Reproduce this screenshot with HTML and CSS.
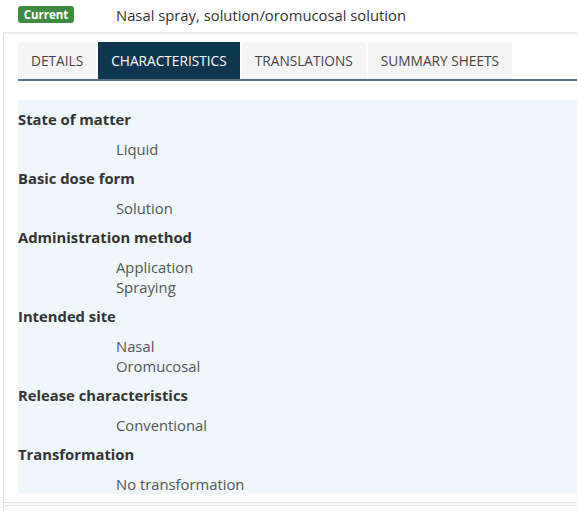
FILE: index.html
```html
<!DOCTYPE html>
<html>
<head>
<meta charset="utf-8">
<link rel="stylesheet" href="styles.css">
</head>
<body>
<div class="header">
  <span class="badge">Current</span>
  <span class="title">Nasal spray, solution/oromucosal solution</span>
</div>
<div class="box">
  <div class="tabs">
    <div class="tab">DETAILS</div>
    <div class="tab active">CHARACTERISTICS</div>
    <div class="tab">TRANSLATIONS</div>
    <div class="tab">SUMMARY SHEETS</div>
  </div>
  <div class="panel">
    <div class="label">State of matter</div>
    <div class="values"><div>Liquid</div></div>
    <div class="label">Basic dose form</div>
    <div class="values"><div>Solution</div></div>
    <div class="label">Administration method</div>
    <div class="values"><div>Application</div><div>Spraying</div></div>
    <div class="label">Intended site</div>
    <div class="values"><div>Nasal</div><div>Oromucosal</div></div>
    <div class="label">Release characteristics</div>
    <div class="values"><div>Conventional</div></div>
    <div class="label">Transformation</div>
    <div class="values last"><div>No transformation</div></div>
  </div>
</div>
<div class="box2"></div>
</body>
</html>
```
FILE: styles.css
```css
html, body {
  margin: 0;
  padding: 0;
  background: #fff;
  font-family: "Open Sans", "Liberation Sans", sans-serif;
  color: #333;
  overflow: hidden;
}
.header {
  height: 32px;
  display: flex;
  align-items: center;
  padding: 0 0 3px 18px;
  box-sizing: border-box;
}
.badge {
  background: #3f8b3f;
  color: #fff;
  font-weight: 700;
  font-size: 11.5px;
  line-height: 17px;
  height: 17px;
  border-radius: 3px;
  width: 56px;
  text-align: center;
}
.title {
  margin-left: 42px;
  font-size: 14.8px;
  line-height: 20px;
  color: #333;
}
.box {
  margin-left: 3px;
  border-top: 2px solid #ececec;
  border-left: 1px solid #dedede;
  border-bottom: 1px solid #dedede;
  padding: 8px 0 9px 14px;
}
.tabs {
  display: flex;
  gap: 2px;
  border-bottom: 2px solid #5b6e7c;
}
.tab {
  height: 37px;
  line-height: 37px;
  padding: 0 13px;
  background: #f5f5f5;
  font-size: 13.7px;
  color: #444;
}
.tab.active {
  background: #0f3651;
  color: #fff;
}
.panel {
  margin-top: 19px;
  background: #eff7fb;
  padding: 9px 0 0 0;
}
.label {
  font-weight: 700;
  font-size: 14.8px;
  line-height: 20px;
  color: #333;
}
.values {
  padding: 10px 0 9px 98px;
  font-size: 14.8px;
  line-height: 20px;
  color: #555;
}
.values.last {
  padding-bottom: 0;
  margin-bottom: -1px;
}
.box2 {
  margin-left: 3px;
  margin-top: 2px;
  height: 20px;
  border-top: 1px solid #dedede;
  border-left: 1px solid #dedede;
}
```
